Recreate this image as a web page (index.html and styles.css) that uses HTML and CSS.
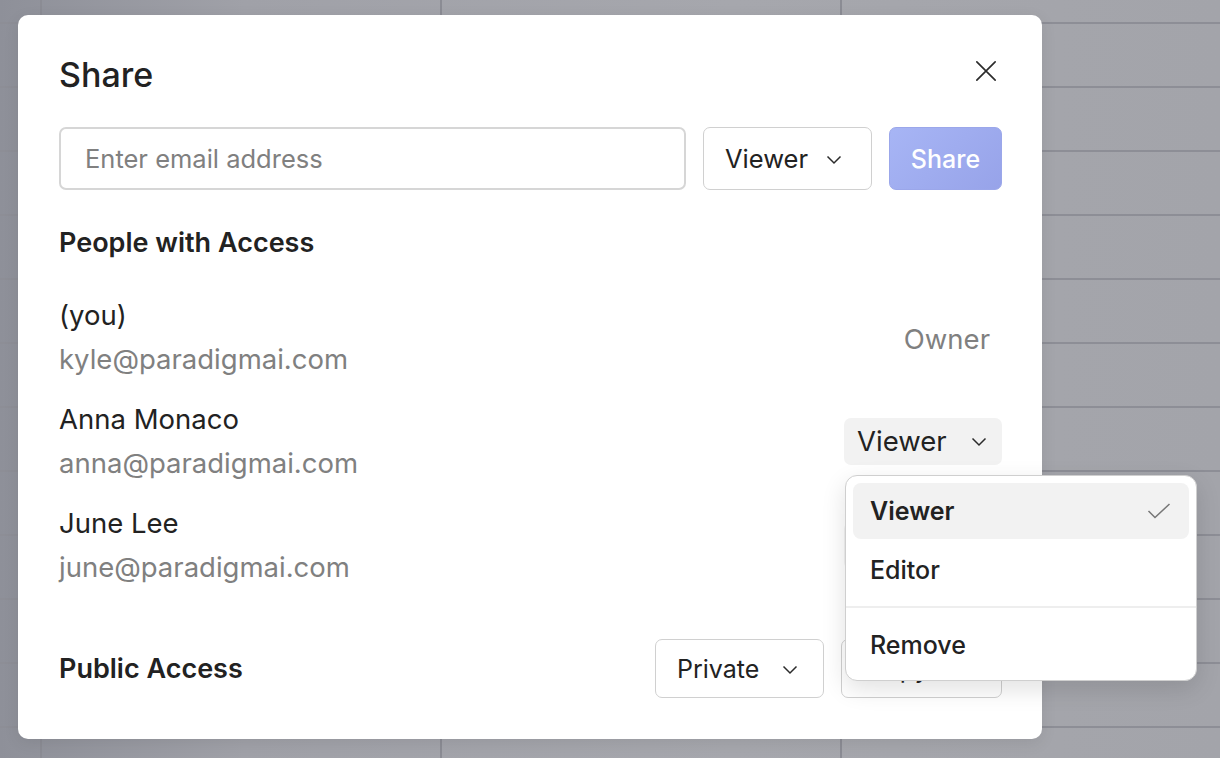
FILE: index.html
```html
<!DOCTYPE html>
<html lang="en">
<head>
    <meta charset="UTF-8">
    <meta name="viewport" content="width=device-width, initial-scale=1.0">
    <title>Share</title>
    <link rel="stylesheet" href="styles.css">
</head>
<body>

<div class="share-modal">
    <!-- Header -->
    <div class="modal-header">
        <h1>Share</h1>
        <button class="close-btn" aria-label="Close">
            <svg width="24" height="24" viewBox="0 0 24 24" fill="none" stroke="#2b2b2b" stroke-width="1.8" stroke-linecap="round">
                <path d="M2 2 L22 22 M22 2 L2 22"/>
            </svg>
        </button>
    </div>

    <!-- Invite row -->
    <div class="invite-row">
        <input type="text" class="email-input" placeholder="Enter email address">
        <button class="select-btn outlined">
            Viewer
            <svg class="chevron" width="16" height="10" viewBox="0 0 16 10" fill="none" stroke="#2b2b2b" stroke-width="1.5"><path d="M1.5 1.5 L8 8 L14.5 1.5"/></svg>
        </button>
        <button class="share-btn">Share</button>
    </div>

    <h2>People with Access</h2>

    <div class="people">
        <div class="person">
            <div class="person-info">
                <div class="name">(you)</div>
                <div class="email">kyle@paradigmai.com</div>
            </div>
            <div class="owner">Owner</div>
        </div>

        <div class="person">
            <div class="person-info">
                <div class="name">Anna Monaco</div>
                <div class="email">anna@paradigmai.com</div>
            </div>
            <div class="role-wrap">
                <button class="select-btn filled">
                    Viewer
                    <svg class="chevron" width="16" height="10" viewBox="0 0 16 10" fill="none" stroke="#2b2b2b" stroke-width="1.5"><path d="M1.5 1.5 L8 8 L14.5 1.5"/></svg>
                </button>

                <!-- Open role menu -->
                <div class="role-menu">
                    <div class="menu-item selected">
                        Viewer
                        <svg width="24" height="16" viewBox="0 0 24 16" fill="none" stroke="#777" stroke-width="1.5"><path d="M1.5 8 L8 14.5 L22.5 1"/></svg>
                    </div>
                    <div class="menu-item">Editor</div>
                    <div class="menu-divider"></div>
                    <div class="menu-item">Remove</div>
                </div>
            </div>
        </div>

        <div class="person">
            <div class="person-info">
                <div class="name">June Lee</div>
                <div class="email">june@paradigmai.com</div>
            </div>
            <button class="select-btn filled">
                Viewer
                <svg class="chevron" width="16" height="10" viewBox="0 0 16 10" fill="none" stroke="#2b2b2b" stroke-width="1.5"><path d="M1.5 1.5 L8 8 L14.5 1.5"/></svg>
            </button>
        </div>
    </div>

    <!-- Public access -->
    <div class="public-row">
        <h2>Public Access</h2>
        <div class="public-actions">
            <button class="select-btn outlined small">
                Private
                <svg class="chevron" width="16" height="10" viewBox="0 0 16 10" fill="none" stroke="#2b2b2b" stroke-width="1.5"><path d="M1.5 1.5 L8 8 L14.5 1.5"/></svg>
            </button>
            <button class="copy-btn">Copy link</button>
        </div>
    </div>
</div>

</body>
</html>
```

FILE: styles.css
```css
body {
    font-family: 'Inter', 'Noto Sans', sans-serif;
    margin: 0;
    padding: 15px 18px;
    height: 758px;
    box-sizing: border-box;
    overflow: hidden;
    color: #222;
    background-color: #a2a3a9;
    background-image:
        linear-gradient(90deg, #8b8c94 2px, transparent 2px),
        linear-gradient(#8d8e96 2px, transparent 2px),
        linear-gradient(90deg, #8e9099 0%, #a0a1a8 20%, #a6a7ad 60%, #a3a4aa 100%);
    background-size: 400px 100%, 100% 64px, 100% 100%;
    background-position: 40px 0, 0 22px, 0 0;
}

.share-modal {
    background-color: #fff;
    width: 1024px;
    height: 724px;
    box-sizing: border-box;
    padding: 40px 40px 0 41px;
    border-radius: 10px;
    box-shadow: 0 4px 16px rgba(0, 0, 0, 0.08);
}

.modal-header {
    display: flex;
    justify-content: space-between;
    align-items: flex-start;
    height: 40px;
}

h1 {
    margin: 0;
    font-size: 34px;
    font-weight: 500;
    line-height: 40px;
    color: #222;
}

.close-btn {
    background: none;
    border: none;
    padding: 0;
    margin: 0;
    width: 32px;
    height: 32px;
    display: flex;
    align-items: center;
    justify-content: center;
    cursor: pointer;
}

.close-btn svg {
    width: 22px;
    height: 22px;
}

/* Invite row */
.invite-row {
    display: flex;
    gap: 17px;
    margin-top: 32px;
    height: 63px;
}

.email-input {
    flex: 1;
    font-family: inherit;
    font-size: 25.5px;
    border: 2px solid #d6d6d6;
    border-radius: 7px;
    padding: 0 24px;
    color: #222;
    outline: none;
}

.email-input::placeholder {
    color: #808080;
}

.select-btn {
    font-family: inherit;
    font-size: 25.5px;
    color: #222;
    display: flex;
    align-items: center;
    justify-content: space-between;
    cursor: pointer;
    box-sizing: border-box;
}

.select-btn.outlined {
    background-color: #fff;
    border: 1px solid #d0d0d0;
    border-radius: 7px;
    width: 169px;
    padding: 0 29px 0 21px;
}

.select-btn.outlined.small {
    width: 169px;
    height: 59px;
    font-size: 25px;
    padding-right: 25px;
}

.select-btn.filled {
    background-color: #f2f2f2;
    border: none;
    border-radius: 7px;
    width: 158px;
    height: 47px;
    padding: 0 15px 0 13px;
    font-size: 27.5px;
}

.chevron {
    width: 16px;
    height: 10px;
    margin-top: 2px;
}

.share-btn {
    font-family: inherit;
    font-size: 25px;
    font-weight: 500;
    color: #fff;
    width: 113px;
    border: 1px solid #9ba7ea;
    border-radius: 7px;
    background: linear-gradient(135deg, #a7b5f5 0%, #97a3e9 100%);
    cursor: pointer;
}

h2 {
    margin: 37px 0 0;
    font-size: 27px;
    font-weight: 600;
    line-height: 32px;
    color: #222;
}

/* People list */
.people {
    margin-top: 34px;
    display: flex;
    flex-direction: column;
    gap: 16px;
}

.person {
    display: flex;
    justify-content: space-between;
    align-items: center;
}

.name,
.email {
    font-size: 27.5px;
    line-height: 44px;
}

.email {
    color: #808080;
}

.owner {
    font-size: 27.5px;
    color: #808080;
    padding-right: 12px;
    margin-top: 4px;
}

.role-wrap {
    position: relative;
}

.role-menu {
    position: absolute;
    top: calc(100% + 10px);
    left: 1px;
    width: 352px;
    box-sizing: border-box;
    background-color: #fff;
    border: 1px solid #cfcfcf;
    border-radius: 12px;
    padding: 7px;
    box-shadow: 0 8px 24px rgba(0, 0, 0, 0.12);
    z-index: 10;
}

.menu-item {
    height: 56px;
    display: flex;
    align-items: center;
    justify-content: space-between;
    padding: 0 17px;
    font-size: 25px;
    font-weight: 500;
    border-radius: 8px;
    color: #222;
}

.menu-item + .menu-item {
    margin-top: 3px;
}

.menu-item.selected {
    background-color: #f2f2f2;
    font-weight: 600;
}

.menu-item.selected svg {
    margin-right: 1px;
}

.menu-divider {
    height: 2px;
    background-color: #eeeeee;
    margin: 8px -7px 9px;
}

/* Public access row */
.public-row {
    display: flex;
    justify-content: space-between;
    align-items: center;
    margin-top: 50px;
}

.public-row h2 {
    margin: 0;
}

.public-actions {
    display: flex;
    gap: 17px;
}

.copy-btn {
    font-family: inherit;
    font-size: 25px;
    color: #222;
    background-color: #fff;
    border: 1px solid #d0d0d0;
    border-radius: 7px;
    width: 161px;
    height: 59px;
    cursor: pointer;
}
```
